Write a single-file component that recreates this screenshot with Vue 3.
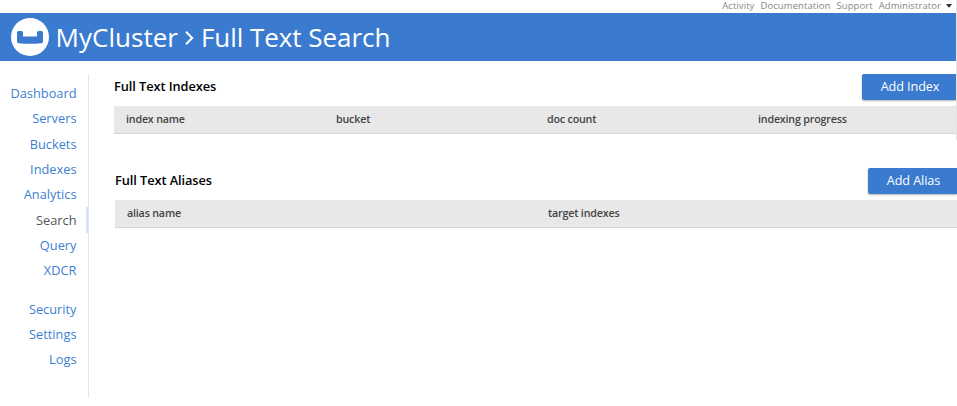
<script setup>
const links = ['Activity', 'Documentation', 'Support']
const mainNav = ['Dashboard', 'Servers', 'Buckets', 'Indexes', 'Analytics', 'Search', 'Query', 'XDCR']
const adminNav = ['Security', 'Settings', 'Logs']
const indexColumns = ['index name', 'bucket', 'doc count', 'indexing progress']
const aliasColumns = ['alias name', 'target indexes']
</script>

<template>
  <div class="page">
    <div class="utility">
      <span v-for="l in links" :key="l" class="util">{{ l }}</span>
      <span class="util admin">Administrator</span>
      <svg class="caret" width="6" height="4" viewBox="0 0 6 4"><path d="M0 0H6L3.6 3.2H2.4Z" fill="#333" /></svg>
    </div>
    <div class="edge"></div>
    <header class="banner">
      <svg class="logo" width="38" height="38" viewBox="0 0 38 38">
        <circle cx="19" cy="19" r="19" fill="#fff" />
        <path d="M7.5 13H10.4Q12 13 12 14.6V18.5H26V14.6Q26 13 27.6 13H30.5Q32 13 32 14.5V23.4Q32 25 30.4 25.2Q19 26.2 7.6 25.2Q6 25 6 23.4V14.5Q6 13 7.5 13Z" fill="#3a7bd0" />
      </svg>
      <h1 class="title">
        <span class="cluster">MyCluster</span>
        <svg class="chevron" width="9" height="16" viewBox="0 0 9 16"><path d="M1 1.7L7.2 8L1 14.3" fill="none" stroke="#fff" stroke-width="2" /></svg>
        <span class="section">Full Text Search</span>
      </h1>
    </header>
    <div class="body">
      <nav class="sidebar">
        <a v-for="n in mainNav" :key="n" class="item" :class="{ active: n === 'Search' }"><span>{{ n }}</span></a>
        <div class="gap"></div>
        <a v-for="n in adminNav" :key="n" class="item"><span>{{ n }}</span></a>
      </nav>
      <main class="content">
        <section class="panel">
          <div class="heading">
            <h2>Full Text Indexes</h2>
            <button class="button">Add Index</button>
          </div>
          <div class="columns four">
            <span v-for="c in indexColumns" :key="c">{{ c }}</span>
          </div>
        </section>
        <section class="panel aliases">
          <div class="heading">
            <h2>Full Text Aliases</h2>
            <button class="button narrow">Add Alias</button>
          </div>
          <div class="columns two">
            <span v-for="c in aliasColumns" :key="c">{{ c }}</span>
            <span class="actions"></span>
          </div>
        </section>
      </main>
    </div>
  </div>
</template>

<style>
body { background: #fff; overflow: hidden; }
</style>

<style scoped>
.page { width: 957px; height: 406px; overflow: hidden; position: relative; font-family: "Open Sans", sans-serif; color: #000; }
.utility { height: 13px; display: flex; justify-content: flex-end; align-items: flex-start; padding-right: 5px; font-size: 9.5px; line-height: 12px; color: #888; }
.util { margin-right: 6px; letter-spacing: 0.08px; }
.admin { margin-right: 5px; }
.caret { margin-top: 4px; }
.edge { position: absolute; right: 0; top: 0; width: 1px; height: 140px; background: #e4e4e4; }
.banner { width: 956px; height: 48px; box-sizing: border-box; padding-left: 11px; background: #3a7bd0; display: flex; align-items: center; }
.logo { flex: none; }
.title { margin: 0 0 0 6.5px; display: flex; align-items: center; color: #fff; font-weight: 400; font-size: 26px; line-height: 48px; white-space: nowrap; }
.cluster { width: 129.5px; letter-spacing: 0.04px; }
.section { letter-spacing: -0.05px; }
.chevron { margin-right: 7px; margin-top: 2px; }
.body { display: flex; padding-top: 13px; }
.sidebar { width: 89px; height: 324px; box-sizing: border-box; border-right: 1px solid #e5e5e5; padding-top: 7px; flex: none; }
.item { display: flex; justify-content: flex-end; height: 25.3px; line-height: 25.3px; padding-right: 11.5px; font-size: 12.8px; color: #3d80d2; }
.item.active { height: 26px; line-height: 26.4px; margin-bottom: -0.7px; color: #555; border-right: 2px solid #d3e2f5; padding-right: 9.5px; }
.gap { height: 13.2px; }
.content { flex: 1; padding-left: 25px; min-width: 0; }
.panel { width: 842px; }
.aliases { margin: 34px 0 0 1px; }
.heading { display: flex; justify-content: space-between; height: 26px; }
h2 { margin: 0; font-size: 12.8px; line-height: 25px; font-weight: 600; letter-spacing: -0.08px; }
.button { font: 400 12.6px/25px "Open Sans", sans-serif; letter-spacing: -0.06px; color: #fff; background: #3a7bd0; border: 0; border-radius: 2px 0 0 2px; padding: 0 0 1px 2px; width: 94px; height: 26px; box-shadow: 0 1px 2px rgba(0, 0, 0, 0.3); }
.button.narrow { width: 89px; }
.columns { margin-top: 6px; height: 28px; box-sizing: border-box; display: grid; background: #e8e8e8; border-bottom: 1px solid #d5d5d5; padding-left: 12px; font-size: 10.7px; letter-spacing: -0.18px; font-weight: 600; line-height: 26px; color: #444; }
.four { grid-template-columns: 210px 211px 211px 1fr; }
.two { grid-template-columns: 421px 345px 1fr; }
.actions { border-left: 1px solid #e4e4e4; height: 22px; }
</style>
